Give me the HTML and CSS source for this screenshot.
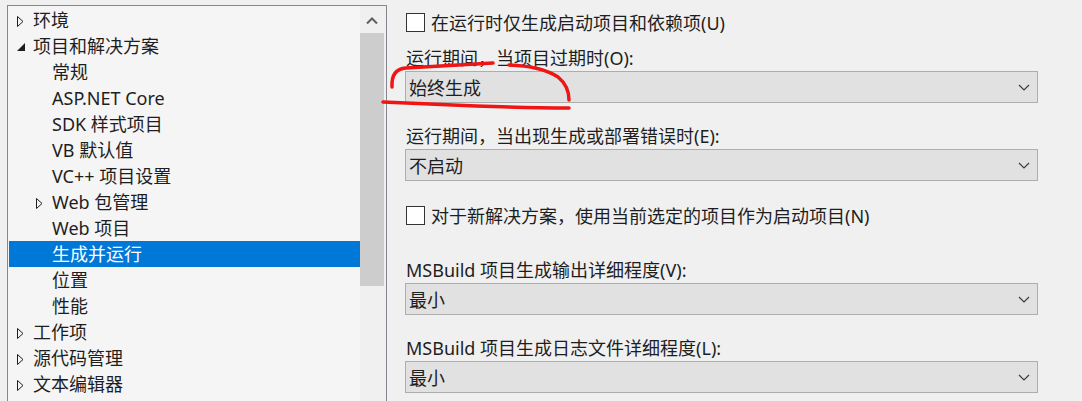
FILE: index.html
```html
<!DOCTYPE html>
<html lang="zh-CN">
<head>
    <meta charset="UTF-8">
    <title>选项 - 生成并运行</title>
    <link rel="stylesheet" href="styles.css">
</head>
<body>
    <div class="window">
        <div class="tree-panel">
            <div class="tree-list">
                <div class="node"><span class="arrow"><svg width="8" height="14" viewBox="0 0 8 14"><path d="M0.5 2.5 L6 7.5 L0.5 12.5 Z" fill="none" stroke="#1e1e1e" stroke-width="1"/></svg></span>环境</div>
                <div class="node"><span class="arrow"><svg width="8" height="14" viewBox="0 0 8 14"><path d="M8 3 L8 11 L0 11 Z" fill="#1e1e1e"/></svg></span>项目和解决方案</div>
                <div class="node child"><span class="arrow"></span>常规</div>
                <div class="node child"><span class="arrow"></span>ASP.NET Core</div>
                <div class="node child"><span class="arrow"></span>SDK 样式项目</div>
                <div class="node child"><span class="arrow"></span>VB 默认值</div>
                <div class="node child"><span class="arrow"></span>VC++ 项目设置</div>
                <div class="node child"><span class="arrow"><svg width="8" height="14" viewBox="0 0 8 14"><path d="M0.5 2.5 L6 7.5 L0.5 12.5 Z" fill="none" stroke="#1e1e1e" stroke-width="1"/></svg></span>Web 包管理</div>
                <div class="node child"><span class="arrow"></span>Web 项目</div>
                <div class="node child selected"><span class="arrow"></span>生成并运行</div>
                <div class="node child"><span class="arrow"></span>位置</div>
                <div class="node child"><span class="arrow"></span>性能</div>
                <div class="node"><span class="arrow"><svg width="8" height="14" viewBox="0 0 8 14"><path d="M0.5 2.5 L6 7.5 L0.5 12.5 Z" fill="none" stroke="#1e1e1e" stroke-width="1"/></svg></span>工作项</div>
                <div class="node"><span class="arrow"><svg width="8" height="14" viewBox="0 0 8 14"><path d="M0.5 2.5 L6 7.5 L0.5 12.5 Z" fill="none" stroke="#1e1e1e" stroke-width="1"/></svg></span>源代码管理</div>
                <div class="node"><span class="arrow"><svg width="8" height="14" viewBox="0 0 8 14"><path d="M0.5 2.5 L6 7.5 L0.5 12.5 Z" fill="none" stroke="#1e1e1e" stroke-width="1"/></svg></span>文本编辑器</div>
            </div>
            <div class="scrollbar">
                <div class="scroll-up"><svg width="12" height="8" viewBox="0 0 12 8"><path d="M1 6.5 L6 1.5 L11 6.5" fill="none" stroke="#606060" stroke-width="2"/></svg></div>
                <div class="scroll-thumb"></div>
            </div>
        </div>

        <div class="settings">
            <label class="check first">
                <span class="box"></span>
                在运行时仅生成启动项目和依赖项(U)
            </label>

            <div class="field tight">
                <div class="field-label">运行期间，当项目过期时(O):</div>
                <div class="select"><span>始终生成</span><svg class="chevron" width="12" height="7" viewBox="0 0 12 7"><path d="M1 1 L6 6 L11 1" fill="none" stroke="#3c3c3c" stroke-width="1.2"/></svg></div>
            </div>

            <div class="field">
                <div class="field-label">运行期间，当出现生成或部署错误时(E):</div>
                <div class="select"><span>不启动</span><svg class="chevron" width="12" height="7" viewBox="0 0 12 7"><path d="M1 1 L6 6 L11 1" fill="none" stroke="#3c3c3c" stroke-width="1.2"/></svg></div>
            </div>

            <label class="check">
                <span class="box"></span>
                对于新解决方案，使用当前选定的项目作为启动项目(N)
            </label>

            <div class="field wide">
                <div class="field-label">MSBuild 项目生成输出详细程度(V):</div>
                <div class="select"><span>最小</span><svg class="chevron" width="12" height="7" viewBox="0 0 12 7"><path d="M1 1 L6 6 L11 1" fill="none" stroke="#3c3c3c" stroke-width="1.2"/></svg></div>
            </div>

            <div class="field">
                <div class="field-label">MSBuild 项目生成日志文件详细程度(L):</div>
                <div class="select"><span>最小</span><svg class="chevron" width="12" height="7" viewBox="0 0 12 7"><path d="M1 1 L6 6 L11 1" fill="none" stroke="#3c3c3c" stroke-width="1.2"/></svg></div>
            </div>
        </div>
    </div>

    <!-- hand-drawn red mark over the first dropdown -->
    <svg class="annotation" width="1082" height="401" viewBox="0 0 1082 401">
        <g fill="none" stroke="#f01414" stroke-width="3.5" stroke-linecap="round">
            <path d="M392 87 Q391 69 406 68 L493 63"/>
            <path d="M509 65 Q541 66 558 77 Q569 86 569 100"/>
            <path d="M383 102 Q430 104 476 106 Q530 108 569 108"/>
        </g>
    </svg>
</body>
</html>
```

FILE: styles.css
```css
* {
    margin: 0;
    padding: 0;
    box-sizing: border-box;
}

body {
    width: 1082px;
    height: 401px;
    overflow: hidden;
    background: #f0f0f0;
    color: #1e1e1e;
    font-family: 'Noto Sans', 'Noto Sans CJK SC', sans-serif;
    font-size: 18px;
    position: relative;
}

.window {
    display: flex;
    align-items: flex-start;
}

/* left tree */
.tree-panel {
    display: flex;
    width: 380px;
    height: 396px;
    margin: 5px 0 0 7px;
    border: 1px solid #828790;
    border-bottom: none;
    background: #f5f5f5;
    overflow: hidden;
}

.tree-list {
    width: 352px;
    padding-top: 1px;
}

.node {
    display: flex;
    align-items: center;
    height: 26px;
    line-height: 26px;
    padding-left: 7px;
    white-space: nowrap;
}

.node.child {
    padding-left: 26px;
}

.node.selected {
    background: #0078d7;
    color: #fff;
    margin-left: 1px;
    padding-left: 25px;
}

.arrow {
    display: flex;
    align-items: center;
    width: 18px;
    height: 26px;
    padding: 1px 0 0 2px;
    flex-shrink: 0;
}

.scrollbar {
    width: 26px;
    background: #f0f0f0;
    display: flex;
    flex-direction: column;
}

.scroll-up {
    height: 27px;
    width: 24px;
    display: flex;
    justify-content: center;
    align-items: center;
    padding-top: 2px;
}

.scroll-thumb {
    width: 24px;
    height: 253px;
    background: #cdcdcd;
}

/* right settings */
.settings {
    display: flex;
    flex-direction: column;
    padding: 9px 0 0 18px;
}

.check {
    display: flex;
    align-items: center;
    gap: 6px;
    height: 26px;
    margin-top: 21px;
    padding-left: 1px;
    white-space: nowrap;
}

.check.first {
    margin-top: 0;
}

.box {
    width: 19px;
    height: 19px;
    border: 1px solid #333;
    background: #fff;
}

.field {
    margin-top: 21px;
}

.field.tight {
    margin-top: 11px;
}

.field.wide {
    margin-top: 30px;
}

.field-label {
    height: 25px;
    line-height: 25px;
    padding-left: 1px;
    white-space: nowrap;
}

.select {
    width: 633px;
    height: 32px;
    border: 1px solid #adadad;
    background: #e1e1e1;
    display: flex;
    align-items: center;
    justify-content: space-between;
    padding: 0 7px 0 3px;
}

.annotation {
    position: absolute;
    left: 0;
    top: 0;
    pointer-events: none;
}
```
